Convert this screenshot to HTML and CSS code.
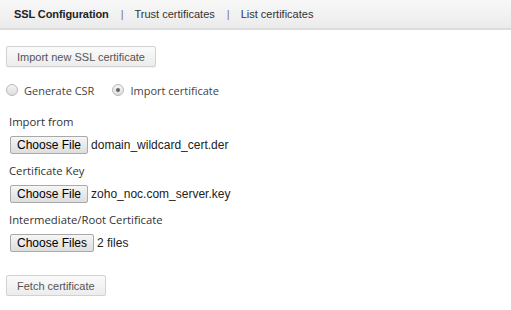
FILE: index.html
```html
<!DOCTYPE html>
<html lang="en">
  <head>
    <meta charset="UTF-8" />
    <title>SSL Configuration</title>
    <link rel="stylesheet" href="styles.css">
  </head>
  <body>
    <div class="tabs">
      <span class="tab active">SSL Configuration</span>
      <span class="sep">|</span>
      <span class="tab">Trust certificates</span>
      <span class="sep">|</span>
      <span class="tab">List certificates</span>
    </div>

    <div class="content">
      <button type="button" class="btn">Import new SSL certificate</button>

      <div class="radios">
        <label class="radio"><span class="dot"></span>Generate CSR</label>
        <label class="radio"><span class="dot checked"></span>Import certificate</label>
      </div>

      <div class="field first">
        <div class="field-label">Import from</div>
        <div class="file-row">
          <span class="file-btn">Choose File</span>
          <span class="file-name">domain_wildcard_cert.der</span>
        </div>
      </div>

      <div class="field">
        <div class="field-label">Certificate Key</div>
        <div class="file-row">
          <span class="file-btn">Choose File</span>
          <span class="file-name">zoho_noc.com_server.key</span>
        </div>
      </div>

      <div class="field">
        <div class="field-label">Intermediate/Root Certificate</div>
        <div class="file-row">
          <span class="file-btn">Choose Files</span>
          <span class="file-name">2 files</span>
        </div>
      </div>

      <button type="button" class="btn fetch">Fetch certificate</button>
    </div>
  </body>
</html>
```

FILE: styles.css
```css
body {
  margin: 0;
  padding: 0;
  background-color: #fff;
  font-family: "Liberation Sans", Arial, sans-serif;
  color: #333;
}

.tabs {
  height: 28px;
  display: flex;
  align-items: center;
  padding-left: 14px;
  background: linear-gradient(#f8f8f8, #ebebeb);
  border-bottom: 2px solid #dcdcdc;
  font-size: 11px;
}

.tab {
  color: #333;
}

.tab.active {
  font-weight: bold;
  color: #222;
  letter-spacing: -0.1px;
}

.sep {
  color: #777;
  margin: 0 11px 0 12px;
}

.content {
  padding: 16px 6px 0 6px;
}

.btn {
  display: block;
  height: 21px;
  padding: 0 10px;
  font-family: "Liberation Sans", Arial, sans-serif;
  font-size: 11px;
  color: #555;
  background: linear-gradient(#fbfbfb, #ececec);
  border: 1px solid #d2d2d2;
  border-radius: 2px;
  box-shadow: 0 1px 1px rgba(0, 0, 0, 0.05);
}

.radios {
  display: flex;
  margin-top: 15px;
  height: 16px;
  align-items: center;
  font-family: "Open Sans", sans-serif;
  font-size: 11px;
  color: #444;
}

.radio {
  display: flex;
  align-items: center;
  margin-right: 18px;
}

.dot {
  width: 10px;
  height: 10px;
  border: 1px solid #b8b8b8;
  border-radius: 50%;
  background: linear-gradient(#f4f4f4, #dedede);
  margin-right: 6px;
  position: relative;
}

.dot.checked::after {
  content: "";
  position: absolute;
  top: 3px;
  left: 3px;
  width: 4px;
  height: 4px;
  border-radius: 50%;
  background-color: #666;
}

.field {
  padding-left: 3px;
}

.field-label {
  font-family: "Open Sans", sans-serif;
  font-size: 11.3px;
  color: #333;
  margin-top: 9px;
  height: 16px;
  line-height: 16px;
}

.field.first .field-label {
  margin-top: 16px;
}

.file-row {
  display: flex;
  align-items: center;
  margin-top: 6px;
  height: 18px;
}

.file-btn {
  height: 16px;
  line-height: 16px;
  padding: 0 6px;
  font-size: 12px;
  color: #000;
  background: linear-gradient(#f6f6f6, #dddddd);
  border: 1px solid #a9a9a9;
  border-radius: 2px;
  margin-left: 1px;
}

.file-name {
  font-size: 12px;
  color: #222;
  margin-left: 3px;
}

.btn.fetch {
  margin-top: 23px;
}
```
